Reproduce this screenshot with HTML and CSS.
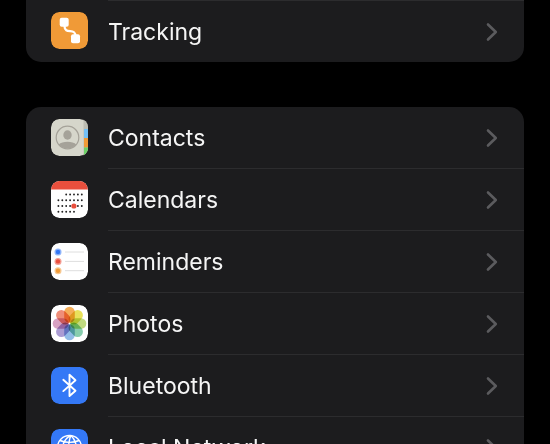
FILE: index.html
```html
<!DOCTYPE html>
<html lang="en">
<head>
  <meta charset="UTF-8" />
  <meta name="viewport" content="width=device-width, initial-scale=1" />
  <title>Privacy</title>
  <link rel="stylesheet" href="styles.css">
</head>
<body>

  <svg class="defs" width="0" height="0" aria-hidden="true">
    <symbol id="chevron" viewBox="0 0 12 20">
      <path d="M2 2.5 L9.8 10 L2 17.5" fill="none" stroke="#5b5b5e" stroke-width="2.6" stroke-linecap="round" stroke-linejoin="round" />
    </symbol>
  </svg>

  <main class="settings">
    <ul class="group group-end">
      <li>
        <a class="row" href="#tracking">
          <svg class="icon" viewBox="0 0 37 37">
            <rect width="37" height="37" rx="8.5" fill="#f09a37" />
            <path d="M13.500 14 C13.500 23 24.500 15.500 24.500 24" fill="none" stroke="#fff" stroke-width="2.300" />
            <rect x="8.700" y="5.700" width="9" height="9" rx="2" fill="#fff" />
            <rect x="20" y="22.300" width="9" height="9" rx="2" fill="#fff" />
          </svg>
          <span class="row-body">Tracking <svg class="chevron"><use href="#chevron" /></svg></span>
        </a>
      </li>
    </ul>

    <ul class="group">
      <li>
        <a class="row" href="#contacts">
          <svg class="icon" viewBox="0 0 37 37">
            <rect width="37" height="37" rx="8.5" fill="#d6d6cb" />
            <path d="M32.500 0 V37 H37 V0 Z" fill="#bdbdb3" />
            <path d="M33 10 H37 V19 H33 Z" fill="#74c0f5" />
            <path d="M33 19 H37 V28.500 H33 Z" fill="#f09a37" />
            <path d="M33 28.500 H37 V37 H33 Z" fill="#6cd266" />
            <circle cx="16.500" cy="18.500" r="11.300" fill="none" stroke="#a5a299" stroke-width="1.200" />
            <ellipse cx="16.500" cy="16" rx="4.200" ry="4.700" fill="#a5a299" />
            <path d="M7.800 25.500 C11 21.800 22 21.800 25.200 25.500 C21 30.800 12 30.800 7.800 25.500 Z" fill="#a5a299" />
          </svg>
          <span class="row-body">Contacts <svg class="chevron"><use href="#chevron" /></svg></span>
        </a>
      </li>
      <li>
        <a class="row" href="#calendars">
          <svg class="icon" viewBox="0 0 37 37">
            <rect width="37" height="37" rx="8.5" fill="#fff" />
            <path d="M0 8.500 A8.500 8.500 0 0 1 8.500 0 H28.500 A8.500 8.500 0 0 1 37 8.500 Z" fill="#e94f3d" />
            <g fill="none" stroke="#222" stroke-width="1.900" stroke-linecap="round" stroke-dasharray="0 3.900">
              <path d="M15.200 13.500 H31.500" />
              <path d="M7.400 19.300 H31.500" />
              <path d="M7.400 25 H31.500" />
              <path d="M7.400 30.800 H23.500" />
            </g>
            <circle cx="22.900" cy="25" r="2.600" fill="#e94f3d" />
          </svg>
          <span class="row-body">Calendars <svg class="chevron"><use href="#chevron" /></svg></span>
        </a>
      </li>
      <li>
        <a class="row" href="#reminders">
          <svg class="icon" viewBox="0 0 37 37">
            <rect width="37" height="37" rx="8.5" fill="#fff" />
            <path d="M14 9 H33 M14 18.400 H33 M14 27.700 H33" stroke="#dedede" stroke-width="1" />
            <g fill="#3478f6"><circle cx="7" cy="9" r="3.500" fill-opacity=".55" /><circle cx="7" cy="9" r="2.200" /></g>
            <g fill="#eb4e3d"><circle cx="7" cy="18.400" r="3.500" fill-opacity=".55" /><circle cx="7" cy="18.400" r="2.200" /></g>
            <g fill="#f09a37"><circle cx="7" cy="27.700" r="3.500" fill-opacity=".55" /><circle cx="7" cy="27.700" r="2.200" /></g>
          </svg>
          <span class="row-body">Reminders <svg class="chevron"><use href="#chevron" /></svg></span>
        </a>
      </li>
      <li>
        <a class="row" href="#photos">
          <svg class="icon" viewBox="0 0 37 37">
            <rect width="37" height="37" rx="8.5" fill="#fff" />
            <g class="petals">
              <rect x="13.200" y="1.700" width="10.600" height="16" rx="5.300" fill="#f3a03c" />
              <rect x="13.200" y="1.700" width="10.600" height="16" rx="5.300" fill="#e5dc3e" transform="rotate(45 18.500 18.500)" />
              <rect x="13.200" y="1.700" width="10.600" height="16" rx="5.300" fill="#b6d56a" transform="rotate(90 18.500 18.500)" />
              <rect x="13.200" y="1.700" width="10.600" height="16" rx="5.300" fill="#72c4a0" transform="rotate(135 18.500 18.500)" />
              <rect x="13.200" y="1.700" width="10.600" height="16" rx="5.300" fill="#7fb0e3" transform="rotate(180 18.500 18.500)" />
              <rect x="13.200" y="1.700" width="10.600" height="16" rx="5.300" fill="#9c8bcb" transform="rotate(225 18.500 18.500)" />
              <rect x="13.200" y="1.700" width="10.600" height="16" rx="5.300" fill="#d192b8" transform="rotate(270 18.500 18.500)" />
              <rect x="13.200" y="1.700" width="10.600" height="16" rx="5.300" fill="#ec7a61" transform="rotate(315 18.500 18.500)" />
            </g>
          </svg>
          <span class="row-body">Photos <svg class="chevron"><use href="#chevron" /></svg></span>
        </a>
      </li>
      <li>
        <a class="row" href="#bluetooth">
          <svg class="icon" viewBox="0 0 37 37">
            <rect width="37" height="37" rx="8.5" fill="#3478f6" />
            <path d="M12.300 12.800 L24.500 23.700 L18.500 29 V7.800 L24.500 13.200 L12.300 24.100" fill="none" stroke="#fff" stroke-width="1.900" stroke-linecap="round" stroke-linejoin="round" />
          </svg>
          <span class="row-body">Bluetooth <svg class="chevron"><use href="#chevron" /></svg></span>
        </a>
      </li>
      <li>
        <a class="row" href="#local-network">
          <svg class="icon" viewBox="0 0 37 37">
            <rect width="37" height="37" rx="8.5" fill="#3478f6" />
            <g fill="none" stroke="#fff" stroke-width="1.400">
              <circle cx="18.500" cy="18.500" r="12" />
              <path d="M9 11.500 C14 14 23 14 28 11.500 M6.500 19 H30.500 M8 25 C14 28 23 28 29 25" />
              <path d="M20 6.500 C12 10 10 19 12 28.500 M20 6.500 C17 12 17 24 18.500 30.500 M20 6.500 C25 11 27 20 25 28.500" />
            </g>
          </svg>
          <span class="row-body">Local Network <svg class="chevron"><use href="#chevron" /></svg></span>
        </a>
      </li>
    </ul>
  </main>

</body>
</html>
```
FILE: styles.css
```css
* {
  box-sizing: border-box;
}

body {
  margin: 0;
  height: 100vh;
  overflow: hidden;
  background-color: #000;
  color: #f5f5f5;
  font-family: Inter, "Liberation Sans", sans-serif;
  font-size: 23px;
  line-height: 32px;
}

.defs {
  position: absolute;
}

.settings {
  display: flex;
  flex-direction: column;
  gap: 45px;
  padding: 0 26px;
}

.group {
  margin: 0;
  padding: 0;
  list-style: none;
  background-color: #1c1c1e;
  border-radius: 15px;
  overflow: hidden;
}

/* tail of a longer group that is scrolled off the top */
.group-end {
  border-top-left-radius: 0;
  border-top-right-radius: 0;
}

.row {
  display: flex;
  align-items: flex-start;
  gap: 20px;
  height: 62px;
  padding-left: 25px;
  color: inherit;
  text-decoration: none;
}

.row-body {
  flex: 1;
  height: 100%;
  display: flex;
  align-items: center;
  justify-content: space-between;
  padding-right: 26px;
  border-bottom: 1px solid #2c2c2e;
}

.group li:last-child .row-body {
  border-bottom: none;
}

.group-end .row-body {
  border-top: 1px solid #2c2c2e;
}

.icon {
  flex: none;
  width: 37px;
  height: 37px;
  margin-top: 12px;
  border-radius: 8px;
}

.petals rect {
  mix-blend-mode: multiply;
  fill-opacity: 0.85;
}

.chevron {
  flex: none;
  width: 12px;
  height: 20px;
}
```
